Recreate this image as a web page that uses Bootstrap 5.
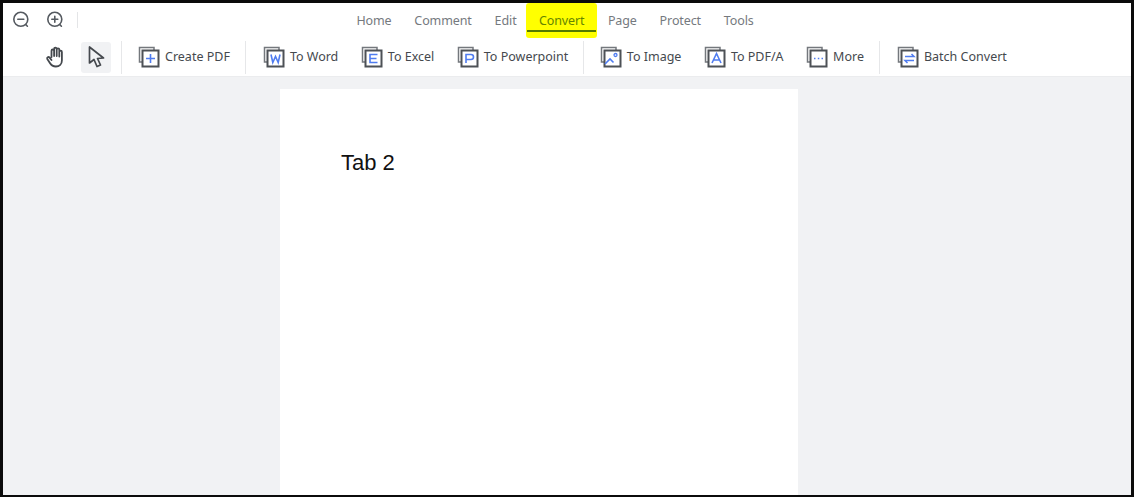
<!DOCTYPE html>
<html lang="en">
<head>
<meta charset="utf-8">
<title>Convert</title>
<link href="https://cdn.jsdelivr.net/npm/bootstrap@5.3.0/dist/css/bootstrap.min.css" rel="stylesheet">
<style>
html,body{height:100%;background:#fff;overflow:hidden}
.shot-frame{height:497px;border:3px solid #0b0b0b;border-bottom-width:2px;margin-right:1px;background:#f1f2f4;overflow:hidden;font-family:"Noto Sans",sans-serif;font-size:12.5px}
.top-bar{background:#fff;height:74px;border-bottom:1px solid #ebecee}
.row-tabs{height:34px;padding-left:8px}
.zoom-btn{width:20px;height:20px;margin-right:14px;color:#555a60}
.zoom-btn svg{display:block}
.top-sep{width:1px;height:16px;background:#e4e5e7;margin-left:-2px}
.tabs-wrap{margin-left:267px;height:35px;align-self:flex-start;letter-spacing:-.1px}
.tab-link{color:#75797e;padding:0 11.4px;height:35px;line-height:35px;text-decoration:none;position:relative}
.tab-hl{background:#ffff00;color:#658500;border-radius:3px;padding:0 12px 0 13px;margin-left:-2px}
.tab-hl::after{content:"";position:absolute;left:1px;right:1px;top:27px;height:2px;background:#557a00}
.row-tools{height:40px;padding-left:42px}
.tool-plain{width:22px;height:22px;color:#45494e}
.cursor-box{width:30px;height:31px;background:#f1f2f4;border-radius:3px;margin-left:14px}
.tool-sep{width:1px;height:33px;background:#e6e7e9}
.sep-a{margin:0 16px 0 10px}
.sep-b{margin:0 16.5px 0 15.5px}
.sep-c{margin:0 16px 0 14.500px}
.tool-item{color:#45494e;gap:5px;margin-right:22.5px;white-space:nowrap}
.tool-item.last-in{margin-right:0}
.tool-item svg{flex:none}
.canvas-area{height:420px}
.doc-sheet{width:518px;height:420px;background:#fff;margin:12px 0 0 277px;padding:59px 61px;font-family:"Liberation Sans",Arial,sans-serif;font-size:22px;line-height:30px;color:#111}
</style>
</head>
<body>
<svg width="0" height="0" class="d-block position-absolute">
<defs>
<g id="doc-base" fill="none">
<path d="M16 4V1.500H1.500V16H4" stroke="#74787d" stroke-width="1.500"/>
<path d="M4.500 4.500H20.500V20.500H4.500Z" stroke="#4d5156" stroke-width="2" fill="#fff"/>
</g>
</defs>
</svg>
<div class="shot-frame d-flex flex-column">
<header class="top-bar">
<div class="row-tabs d-flex align-items-center">
<span class="zoom-btn"><svg width="20" height="20" viewBox="0 0 20 20" fill="none" stroke="currentColor" stroke-width="1.600" stroke-linecap="round"><circle cx="9.800" cy="9.300" r="7"/><path d="M6.800 9.300h6M14.800 14.600l1.600 1.600"/></svg></span>
<span class="zoom-btn"><svg width="20" height="20" viewBox="0 0 20 20" fill="none" stroke="currentColor" stroke-width="1.600" stroke-linecap="round"><circle cx="9.800" cy="9.300" r="7"/><path d="M6.800 9.300h6M9.800 6.300v6M14.800 14.600l1.600 1.600"/></svg></span>
<span class="top-sep"></span>
<nav class="tabs-wrap d-flex">
<a class="tab-link" href="#">Home</a>
<a class="tab-link" href="#">Comment</a>
<a class="tab-link" href="#">Edit</a>
<a class="tab-link tab-hl" href="#">Convert</a>
<a class="tab-link" href="#">Page</a>
<a class="tab-link" href="#">Protect</a>
<a class="tab-link" href="#">Tools</a>
</nav>
</div>
<div class="row-tools d-flex align-items-center">
<span class="tool-plain"><svg width="22" height="22" viewBox="0 0 22 22" fill="none" stroke="currentColor" stroke-width="1.800" stroke-linecap="round" stroke-linejoin="round"><path d="M6.500 11V4.800a1.300 1.300 0 0 1 2.600 0V10M9.100 10V3a1.300 1.300 0 0 1 2.600 0V10M11.700 10V3.600a1.300 1.300 0 0 1 2.600 0V10.500M14.300 10.500V6a1.300 1.300 0 0 1 2.600 0v8.500c0 3.500-2.500 6-6 6-3 0-4.700-1.300-6-3.500L2.300 13c-.8-1.500 1.200-2.700 2.300-1.400L6.500 14"/></svg></span>
<span class="cursor-box d-flex align-items-center justify-content-center"><svg width="20" height="24" viewBox="0 0 20 24" fill="none" stroke="#45494e" stroke-width="1.700" stroke-linejoin="round"><path d="M3.500 2v16l4.500-3.500 3 7 3.500-1.500-3-6.500 6-.5Z"/></svg></span>
<span class="tool-sep sep-a"></span>
<span class="tool-item d-flex align-items-center last-in"><svg width="22" height="22" viewBox="0 0 22 22"><use href="#doc-base"/><path d="M12.500 8v9M8 12.500h9" stroke="#4f7cf0" stroke-width="1.600" fill="none"/></svg>Create PDF</span>
<span class="tool-sep sep-b"></span>
<span class="tool-item d-flex align-items-center"><svg width="22" height="22" viewBox="0 0 22 22"><use href="#doc-base"/><path d="M8 8.500l1.800 8 2.700-6 2.700 6 1.800-8" stroke="#4f7cf0" stroke-width="1.600" fill="none"/></svg>To Word</span>
<span class="tool-item d-flex align-items-center"><svg width="22" height="22" viewBox="0 0 22 22"><use href="#doc-base"/><path d="M16.500 8.500H9v8h7.500M9 12.500h6.500" stroke="#4f7cf0" stroke-width="1.600" fill="none"/></svg>To Excel</span>
<span class="tool-item d-flex align-items-center last-in"><svg width="22" height="22" viewBox="0 0 22 22"><use href="#doc-base"/><path d="M9 17V8.500h5a2.500 2.500 0 0 1 0 5H9" stroke="#4f7cf0" stroke-width="1.600" fill="none"/></svg>To Powerpoint</span>
<span class="tool-sep sep-c"></span>
<span class="tool-item d-flex align-items-center"><svg width="22" height="22" viewBox="0 0 22 22"><use href="#doc-base"/><path d="M5 18l5-5 3.500 3.500" stroke="#4f7cf0" stroke-width="1.600" fill="none"/><circle cx="15.500" cy="9" r="1.500" stroke="#4f7cf0" stroke-width="1.300" fill="none"/></svg>To Image</span>
<span class="tool-item d-flex align-items-center"><svg width="22" height="22" viewBox="0 0 22 22"><use href="#doc-base"/><path d="M8 17l4.500-9.500L17 17M9.500 14h6" stroke="#4f7cf0" stroke-width="1.600" fill="none"/></svg>To PDF/A</span>
<span class="tool-item d-flex align-items-center last-in"><svg width="22" height="22" viewBox="0 0 22 22"><use href="#doc-base"/><path d="M8 12.500h1.500M11.800 12.500h1.500M15.500 12.500H17" stroke="#4f7cf0" stroke-width="1.600" fill="none"/></svg>More</span>
<span class="tool-sep sep-b"></span>
<span class="tool-item d-flex align-items-center last-in"><svg width="22" height="22" viewBox="0 0 22 22"><use href="#doc-base"/><path d="M8 10.500h9l-2.500-2.500M17 14.500H8l2.500 2.500" stroke="#4f7cf0" stroke-width="1.500" fill="none"/></svg>Batch Convert</span>
</div>
</header>
<main class="canvas-area">
<div class="doc-sheet">Tab 2</div>
</main>
</div>
</body>
</html>
